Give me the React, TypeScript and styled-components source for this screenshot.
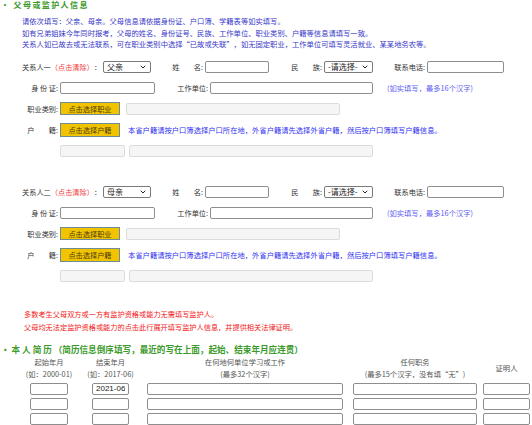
import React from 'react'
import styled, { createGlobalStyle } from 'styled-components'
import { ChevronDown } from 'lucide-react'

const GlobalStyle = createGlobalStyle`
  html, body {
    margin: 0;
    padding: 0;
    background: #fff;
    overflow: hidden;
  }
  body {
    font-family: "Noto Sans CJK SC", "Noto Sans", sans-serif;
    color: #333;
    text-spacing-trim: space-all;
  }
`

const Page = styled.div`
  width: 532px;
  height: 425px;
  overflow: hidden;
`

const SectionTitle = styled.div<{ $spaced?: boolean }>`
  height: 9px;
  line-height: 9px;
  font-size: ${(p) => (p.$spaced ? '8.6px' : '8px')};
  font-weight: bold;
  color: #3a9a2a;
  letter-spacing: ${(p) => (p.$spaced ? '0' : '1.4px')};
  white-space: nowrap;
  padding-left: 1px;
`

const Notes = styled.div`
  margin-top: 7px;
  padding-left: 22px;
  font-size: 7.3px;
  line-height: 11.5px;
  color: #3838c8;
  white-space: nowrap;
`

const PersonBlock = styled.div<{ $top: number }>`
  margin-top: ${(p) => p.$top}px;
  padding-left: 22px;
  display: flex;
  flex-direction: column;
  gap: 7px;
`

const Row = styled.div<{ $indent?: number }>`
  height: 14px;
  display: flex;
  align-items: center;
  padding-left: ${(p) => p.$indent ?? 0}px;
  font-size: 7.2px;
  white-space: nowrap;
`

const Label = styled.span<{ $w: number }>`
  width: ${(p) => p.$w}px;
  flex: none;
  text-align: right;
  padding-right: 2px;
  box-sizing: border-box;
  color: #333;
`

const RelLabel = styled.span`
  width: 81px;
  flex: none;
  color: #333;
`

const Red = styled.span`
  color: #f23c3c;
`

const SelectBox = styled.div<{ $w: number }>`
  width: ${(p) => p.$w}px;
  height: 12px;
  flex: none;
  box-sizing: border-box;
  display: flex;
  align-items: center;
  justify-content: space-between;
  padding: 0 3px 0 3px;
  border: 1px solid #7a7a7a;
  border-radius: 2px;
  background: #fff;
  color: #222;
  font-size: 8px;
  line-height: 10px;

  svg {
    flex: none;
  }
`

const Input = styled.input<{ $w: number; $disabled?: boolean; $gap?: number }>`
  width: ${(p) => p.$w}px;
  height: 12px;
  flex: none;
  box-sizing: border-box;
  margin: 0 0 0 ${(p) => p.$gap ?? 0}px;
  padding: 0 2px;
  border: 1px solid ${(p) => (p.$disabled ? '#dcdcdc' : '#8e8e8e')};
  border-radius: 2px;
  background: ${(p) => (p.$disabled ? '#f5f5f5' : '#fff')};
  font-family: "Liberation Sans", sans-serif;
  font-size: 8px;
  color: #222;
`

const PickButton = styled.button<{ $h: number }>`
  width: 60px;
  height: ${(p) => p.$h}px;
  flex: none;
  box-sizing: border-box;
  padding: 0;
  border: 1px solid #6e8c96;
  background: #f2c400;
  color: #4a3a10;
  font-family: "Noto Sans CJK SC", sans-serif;
  font-size: 7.2px;
  cursor: pointer;
`

const Hint = styled.span<{ $gap: number; $color: string }>`
  margin-left: ${(p) => p.$gap}px;
  color: ${(p) => p.$color};
  font-size: 7.3px;
`

const RedNotes = styled.div`
  margin-top: 25px;
  padding-left: 24px;
  font-size: 7.2px;
  line-height: 13px;
  color: #f01818;
  white-space: nowrap;
`

const ResumeTitle = styled(SectionTitle)`
  margin-top: 10px;
  height: 10px;
  line-height: 10px;
`

const ResumeGrid = styled.div`
  margin-top: 2px;
  padding-left: 18px;
  display: grid;
  grid-template-columns: 62px 61px 208px 132px 51px;
  row-gap: 3px;
  font-size: 7.3px;
  color: #555;
`

const HeadCell = styled.div`
  text-align: center;
  line-height: 12px;
  align-self: center;
  white-space: nowrap;
  color: #555;
`

const Cell = styled.div`
  display: flex;
  justify-content: center;
`

const CellInput = styled.input<{ $w: number }>`
  width: ${(p) => p.$w}px;
  height: 12px;
  box-sizing: border-box;
  margin: 0;
  padding: 0 3px;
  border: 1px solid #8e8e8e;
  border-radius: 2px;
  background: #fff;
  font-family: "Liberation Sans", sans-serif;
  font-size: 8px;
  color: #222;
`

function Select({ w, value }: { w: number; value: string }) {
  return (
    <SelectBox $w={w}>
      <span>{value}</span>
      <ChevronDown size={8} strokeWidth={3} color="#222" />
    </SelectBox>
  )
}

function PersonInfo({ top, name, rel }: { top: number; name: string; rel: string }) {
  return (
    <PersonBlock $top={top}>
      <Row>
        <RelLabel>
          {name}
          <Red>（点击清除）</Red>：
        </RelLabel>
        <Select w={48} value={rel} />
        <Label $w={54}>姓&emsp;&emsp;名:</Label>
        <Input $w={64} />
        <Label $w={55}>民&emsp;&emsp;族:</Label>
        <Select w={49} value="-请选择-" />
        <Label $w={54}>联系电话:</Label>
        <Input $w={77} />
      </Row>
      <Row>
        <Label $w={38}>身 份 证:</Label>
        <Input $w={95} />
        <Label $w={55}>工作单位:</Label>
        <Input $w={163} />
        <Hint $gap={14} $color="#6060f0">(如实填写，最多16个汉字)</Hint>
      </Row>
      <Row>
        <Label $w={38}>职业类别:</Label>
        <PickButton $h={13}>点击选择职业</PickButton>
        <Input $w={214} $disabled $gap={6} disabled />
      </Row>
      <Row>
        <Label $w={38}>户&emsp;&emsp;籍:</Label>
        <PickButton $h={14}>点击选择户籍</PickButton>
        <Hint $gap={8} $color="#3030f0">
          本省户籍请按户口簿选择户口所在地，外省户籍请先选择外省户籍，然后按户口簿填写户籍信息。
        </Hint>
      </Row>
      <Row $indent={38}>
        <Input $w={65} $disabled disabled />
        <Input $w={244} $disabled $gap={4} disabled />
      </Row>
    </PersonBlock>
  )
}

const widths = [38, 37, 196, 124, 47]

export default function App() {
  return (
    <Page>
      <GlobalStyle />
      <SectionTitle>· 父母或监护人信息</SectionTitle>
      <Notes>
        <div>请依次填写：父亲、母亲。父母信息请依据身份证、户口簿、学籍表等如实填写。</div>
        <div>如有兄弟姐妹今年同时报考，父母的姓名、身份证号、民族、工作单位、职业类别、户籍等信息请填写一致。</div>
        <div>关系人如已故去或无法联系，可在职业类别中选择“已故或失联”，如无固定职业，工作单位可填写灵活就业、某某地务农等。</div>
      </Notes>
      <PersonInfo top={9} name="关系人一" rel="父亲" />
      <PersonInfo top={27} name="关系人二" rel="母亲" />
      <RedNotes>
        <div>多数考生父母双方或一方有监护资格或能力无需填写监护人。</div>
        <div>父母均无法定监护资格或能力的点击此行展开填写监护人信息，并提供相关法律证明。</div>
      </RedNotes>
      <ResumeTitle $spaced>
        · 本 人 简 历 （简历信息倒序填写，最近的写在上面，起始、结束年月应连贯）
      </ResumeTitle>
      <ResumeGrid>
        <HeadCell>
          起始年月
          <br />
          (如：2000-01)
        </HeadCell>
        <HeadCell>
          结束年月
          <br />
          (如：2017-06)
        </HeadCell>
        <HeadCell>
          在何地何单位学习或工作
          <br />
          (最多32个汉字)
        </HeadCell>
        <HeadCell>
          任何职务
          <br />
          (最多15个汉字，没有填“无”)
        </HeadCell>
        <HeadCell>证明人</HeadCell>
        {[0, 1, 2].map((r) =>
          widths.map((w, c) => (
            <Cell key={`${r}-${c}`}>
              <CellInput $w={w} defaultValue={r === 0 && c === 1 ? '2021-06' : ''} />
            </Cell>
          ))
        )}
      </ResumeGrid>
    </Page>
  )
}
